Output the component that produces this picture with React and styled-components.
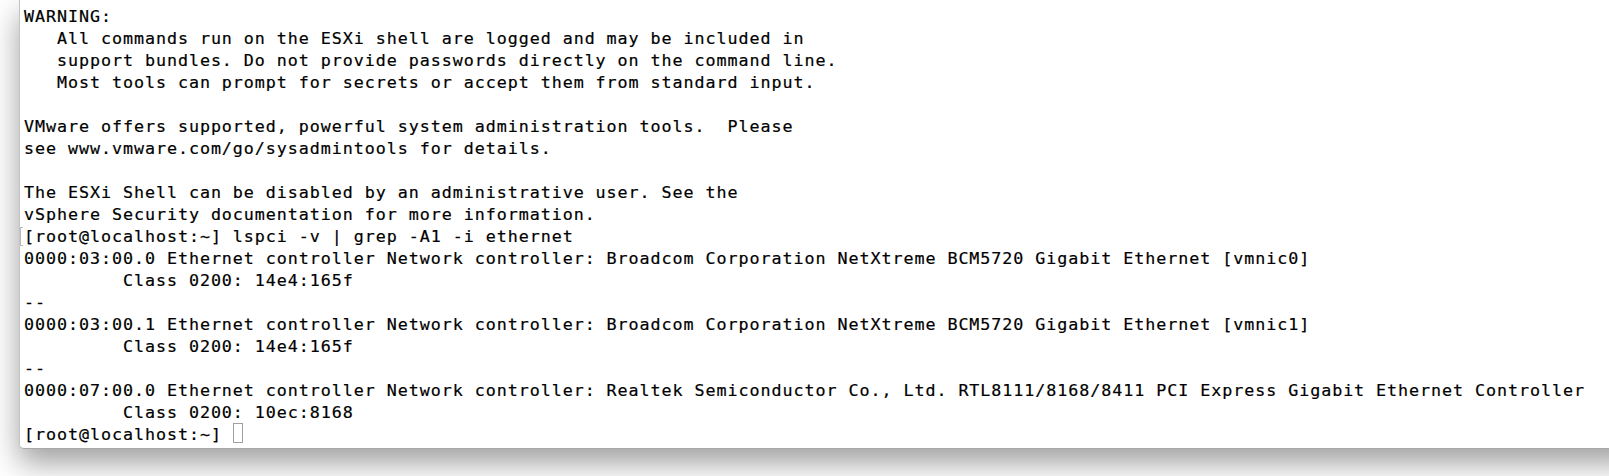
import React from "react";
import styled, { createGlobalStyle } from "styled-components";

const GlobalStyle = createGlobalStyle`
  html, body {
    margin: 0;
    padding: 0;
    background: #ffffff;
    overflow: hidden;
  }
`;

const lines = [
  "WARNING:",
  "   All commands run on the ESXi shell are logged and may be included in",
  "   support bundles. Do not provide passwords directly on the command line.",
  "   Most tools can prompt for secrets or accept them from standard input.",
  "",
  "VMware offers supported, powerful system administration tools.  Please",
  "see www.vmware.com/go/sysadmintools for details.",
  "",
  "The ESXi Shell can be disabled by an administrative user. See the",
  "vSphere Security documentation for more information.",
  { text: "[root@localhost:~] lspci -v | grep -A1 -i ethernet", marked: true },
  "0000:03:00.0 Ethernet controller Network controller: Broadcom Corporation NetXtreme BCM5720 Gigabit Ethernet [vmnic0]",
  "         Class 0200: 14e4:165f",
  "--",
  "0000:03:00.1 Ethernet controller Network controller: Broadcom Corporation NetXtreme BCM5720 Gigabit Ethernet [vmnic1]",
  "         Class 0200: 14e4:165f",
  "--",
  "0000:07:00.0 Ethernet controller Network controller: Realtek Semiconductor Co., Ltd. RTL8111/8168/8411 PCI Express Gigabit Ethernet Controller",
  "         Class 0200: 10ec:8168",
];

export default function App() {
  return (
    <>
      <GlobalStyle />
      <Desktop>
        <TerminalWindow>
          <Screen>
            {lines.map((line, i) => {
              const text = typeof line === "string" ? line : line.text;
              const marked = typeof line !== "string" && line.marked;
              return (
                <Line key={i}>
                  {marked && <Mark />}
                  {text}
                </Line>
              );
            })}
            <Line>
              {"[root@localhost:~] "}
              <Cursor />
            </Line>
          </Screen>
        </TerminalWindow>
      </Desktop>
    </>
  );
}

const Desktop = styled.div`
  width: 100%;
  height: 476px;
  display: flex;
  align-items: flex-start;
  padding-left: 19px;
  box-sizing: border-box;
`;

const TerminalWindow = styled.div`
  flex: 0 0 auto;
  width: 1620px;
  background: #ffffff;
  border-left: 1px solid #c4c4c4;
  border-bottom: 1px solid #a8a8a8;
  border-bottom-left-radius: 5px;
  box-shadow: 0 14px 30px rgba(0, 0, 0, 0.38);
`;

const Screen = styled.div`
  display: flex;
  flex-direction: column;
  padding: 5px 0 3px 4px;
  font-family: "DejaVu Sans Mono", "Liberation Mono", monospace;
  font-size: 16.7px;
  letter-spacing: 0.946px;
  line-height: 22px;
  color: #000000;
  -webkit-text-stroke: 0.2px #000000;
`;

const Line = styled.div`
  position: relative;
  height: 22px;
  white-space: pre;
`;

const Mark = styled.span`
  position: absolute;
  left: -4px;
  top: 2px;
  width: 2px;
  height: 17px;
  border: 1px solid #b8b8b8;
  border-right: none;
`;

const Cursor = styled.span`
  display: inline-block;
  vertical-align: top;
  width: 10px;
  height: 20px;
  border: 1px solid #a0a0a0;
  box-sizing: border-box;
`;
